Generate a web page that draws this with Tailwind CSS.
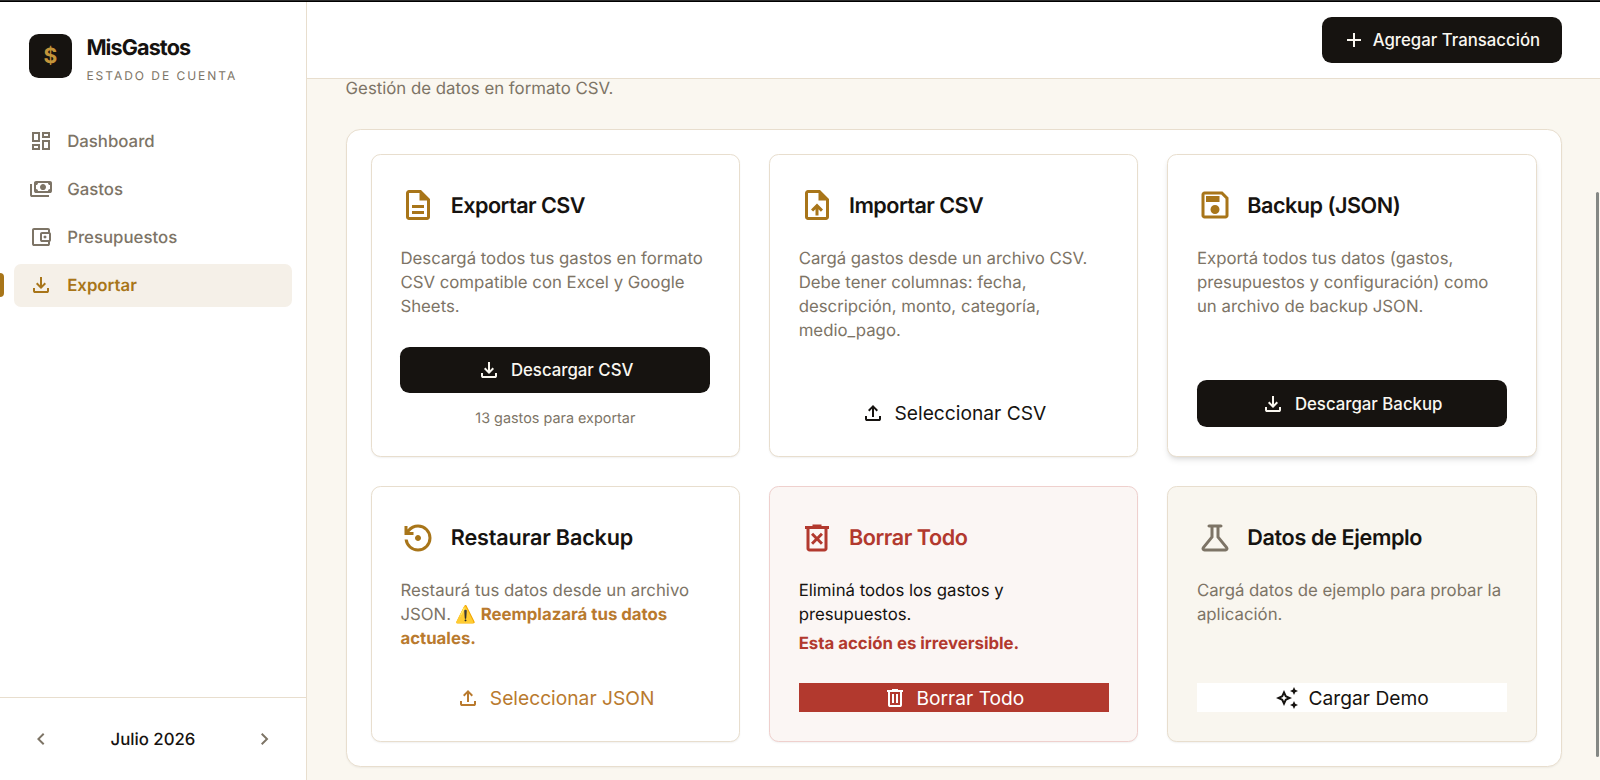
<!DOCTYPE html>
<html lang="es">
<head>
  <meta charset="UTF-8">
  <title>MisGastos</title>
  <script src="https://cdn.jsdelivr.net/npm/@tailwindcss/browser@4"></script>
</head>
<body class="h-[780px] overflow-hidden bg-[#faf7f0] text-[#161310] font-['Inter',sans-serif] text-[19.2px] leading-[28.8px] [text-rendering:geometricPrecision]">

  <!-- Icons -->
  <svg class="hidden">
    <symbol id="i-dashboard" viewBox="0 0 24 24"><path d="M19 5v2h-4V5h4M9 5v6H5V5h4m10 8v6h-4v-6h4M9 17v2H5v-2h4M21 3h-8v6h8V3zM11 3H3v10h8V3zm10 8h-8v10h8V11zm-10 4H3v6h8v-6z"/></symbol>
    <symbol id="i-payments" viewBox="0 -960 960 960"><path d="M560-440q-50 0-85-35t-35-85q0-50 35-85t85-35q50 0 85 35t35 85q0 50-35 85t-85 35ZM280-320q-33 0-56.5-23.5T200-400v-320q0-33 23.5-56.5T280-800h560q33 0 56.5 23.5T920-720v320q0 33-23.5 56.5T840-320H280Zm80-80h400q0-33 23.5-56.5T840-480v-160q-33 0-56.5-23.5T760-720H360q0 33-23.5 56.5T280-640v160q33 0 56.5 23.5T360-400Zm440 240H120q-33 0-56.5-23.5T40-240v-440h80v440h680v80Z"/></symbol>
    <symbol id="i-wallet" viewBox="0 -960 960 960"><path d="M200-120q-33 0-56.5-23.5T120-200v-560q0-33 23.5-56.5T200-840h560q33 0 56.5 23.5T840-760v100h-80v-100H200v560h560v-100h80v100q0 33-23.5 56.5T760-120H200Zm320-160q-33 0-56.5-23.5T440-360v-240q0-33 23.5-56.5T520-680h280q33 0 56.5 23.5T880-600v240q0 33-23.5 56.5T800-280H520Zm280-80v-240H520v240h280Zm-160-60q25 0 42.5-17.5T700-480q0-25-17.5-42.5T640-540q-25 0-42.5 17.5T580-480q0 25 17.5 42.5T640-420Z"/></symbol>
    <symbol id="i-download" viewBox="0 -960 960 960"><path d="M480-320 280-520l56-58 104 104v-326h80v326l104-104 56 58-200 200ZM240-160q-33 0-56.5-23.5T160-240v-120h80v120h480v-120h80v120q0 33-23.5 56.5T720-160H240Z"/></symbol>
    <symbol id="i-upload" viewBox="0 -960 960 960"><path d="M440-320v-326L336-542l-56-58 200-200 200 200-56 58-104-104v326h-80ZM240-160q-33 0-56.5-23.5T160-240v-120h80v120h480v-120h80v120q0 33-23.5 56.5T720-160H240Z"/></symbol>
    <symbol id="i-description" viewBox="0 -960 960 960"><path d="M320-240h320v-80H320v80Zm0-160h320v-80H320v80ZM240-80q-33 0-56.5-23.5T160-160v-640q0-33 23.5-56.5T240-880h320l240 240v480q0 33-23.5 56.5T720-80H240Zm280-520v-200H240v640h480v-440H520Z"/></symbol>
    <symbol id="i-upload-file" viewBox="0 -960 960 960"><path d="M440-200h80v-167l64 64 56-57-160-160-160 160 57 56 63-63v167ZM240-80q-33 0-56.5-23.5T160-160v-640q0-33 23.5-56.5T240-880h320l240 240v480q0 33-23.5 56.5T720-80H240Zm280-520v-200H240v640h480v-440H520Z"/></symbol>
    <symbol id="i-save" viewBox="0 -960 960 960"><path d="M840-680v480q0 33-23.5 56.5T760-120H200q-33 0-56.5-23.5T120-200v-560q0-33 23.5-56.5T200-840h480l160 160Zm-80 34L646-760H200v560h560v-446ZM480-240q50 0 85-35t35-85q0-50-35-85t-85-35q-50 0-85 35t-35 85q0 50 35 85t85 35ZM240-560h360v-160H240v160Z"/></symbol>
    <symbol id="i-restore" viewBox="0 -960 960 960"><path d="M480-120q-138 0-240.5-91.5T122-440h82q14 104 92.5 172T480-200q117 0 198.5-81.5T760-480q0-117-81.5-198.5T480-760q-69 0-129 32t-101 88h110v80H120v-240h80v94q51-64 124.5-99T480-840q75 0 140.5 28.5t114 77q48.5 48.5 77 114T840-480q0 75-28.5 140.5t-77 114q-48.5 48.5-114 77T480-120Zm0-280q-33 0-56.5-23.5T400-480q0-33 23.5-56.5T480-560q33 0 56.5 23.5T560-480q0 33-23.5 56.5T480-400Z"/></symbol>
    <symbol id="i-delete-forever" viewBox="0 -960 960 960"><path d="m376-300 104-104 104 104 56-56-104-104 104-104-56-56-104 104-104-104-56 56 104 104-104 104 56 56Zm-96 180q-33 0-56.5-23.5T200-200v-520h-40v-80h200v-40h240v40h200v80h-40v520q0 33-23.5 56.5T680-120H280Zm400-600H280v520h400v-520Z"/></symbol>
    <symbol id="i-delete" viewBox="0 -960 960 960"><path d="M280-120q-33 0-56.5-23.5T200-200v-520h-40v-80h200v-40h240v40h200v80h-40v520q0 33-23.5 56.5T680-120H280Zm400-600H280v520h400v-520ZM360-280h80v-360h-80v360Zm160 0h80v-360h-80v360Z"/></symbol>
    <symbol id="i-science" viewBox="0 -960 960 960"><path d="M200-120q-51 0-72.5-45.5T138-250l222-270v-240h-40q-17 0-28.5-11.5T280-800q0-17 11.5-28.5T320-840h320q17 0 28.5 11.5T680-800q0 17-11.5 28.5T640-760h-40v240l222 270q32 39 10.5 84.5T760-120H200Zm0-80h560L520-492v-268h-80v268L200-200Z"/></symbol>
    <symbol id="i-sparkles" viewBox="0 -960 960 960"><path d="m760-600-50-110-110-50 110-50 50-110 50 110 110 50-110 50-50 110Zm0 560-50-110-110-50 110-50 50-110 50 110 110 50-110 50-50 110ZM360-160 260-380 40-480l220-100 100-220 100 220 220 100-220 100-100 220Zm0-194 40-86 86-40-86-40-40-86-40 86-86 40 86 40 40 86Z"/></symbol>
    <symbol id="i-add" viewBox="0 -960 960 960"><path d="M440-440H200v-80h240v-240h80v240h240v80H520v240h-80v-240Z"/></symbol>
    <symbol id="i-left" viewBox="0 -960 960 960"><path d="M560-240 320-480l240-240 56 56-184 184 184 184-56 56Z"/></symbol>
    <symbol id="i-right" viewBox="0 -960 960 960"><path d="M504-480 320-664l56-56 240 240-240 240-56-56 184-184Z"/></symbol>
  </svg>

  <div class="flex h-full flex-col">
    <div class="h-[2px] shrink-0 border-t border-[#2b2b2b] bg-black"></div>

    <div class="flex min-h-0 flex-1">
      <!-- Sidebar -->
      <aside class="flex w-[307px] shrink-0 flex-col border-r border-[#e8dece] bg-white">
        <div class="flex gap-[14.4px] px-[28.8px] pt-[32px]">
          <div class="flex h-[44px] w-[43.2px] items-center justify-center rounded-[9.6px] bg-[#161310] pt-[2px] text-[21px] font-bold text-[#c4953a]">$</div>
          <div>
            <h1 class="mt-px text-[21.6px] leading-[27px] font-bold tracking-[-0.9px]">MisGastos</h1>
            <p class="mt-[5px] text-[12px] leading-[18px] tracking-[1.97px] text-[#7d7466]">ESTADO DE CUENTA</p>
          </div>
        </div>

        <nav class="mt-[35px] flex flex-col gap-[4.8px] px-[14.4px] text-[16.8px] leading-[24px] font-medium text-[#7d7466]">
          <a href="#" class="flex h-[43.2px] items-center gap-[14.4px] rounded-[7px] px-[14.4px]"><svg class="mb-[2px] size-6 fill-current"><use href="#i-dashboard"/></svg>Dashboard</a>
          <a href="#" class="flex h-[43.2px] items-center gap-[14.4px] rounded-[7px] px-[14.4px]"><svg class="mb-[2px] size-6 fill-current"><use href="#i-payments"/></svg>Gastos</a>
          <a href="#" class="flex h-[43.2px] items-center gap-[14.4px] rounded-[7px] px-[14.4px]"><svg class="mb-[2px] size-6 fill-current"><use href="#i-wallet"/></svg>Presupuestos</a>
          <a href="#" class="relative flex h-[43.2px] items-center gap-[14.4px] rounded-[7px] bg-[#f5f0e8] px-[14.4px] font-semibold text-[#a87519]">
            <span class="absolute top-[9px] -left-[14.4px] h-6 w-1 rounded-r bg-[#a87519]"></span>
            <svg class="mb-px size-6 fill-current"><use href="#i-download"/></svg>Exportar
          </a>
        </nav>

        <!-- Month picker -->
        <div class="mt-auto flex h-[83px] items-center justify-between border-t border-[#e8dece] px-[28.8px] text-[16.8px] leading-[24px] font-medium">
          <svg class="size-6 fill-[#7d7466]"><use href="#i-left"/></svg>
          <span class="mt-px">Julio 2026</span>
          <svg class="size-6 fill-[#7d7466]"><use href="#i-right"/></svg>
        </div>
      </aside>

      <div class="flex min-w-0 flex-1 flex-col">
        <header class="flex h-[77px] shrink-0 items-center justify-end border-b border-[#e8dece] bg-white px-[38.4px]">
          <button class="flex h-[46px] w-[240px] items-center justify-center gap-[6.6px] rounded-[9.6px] bg-[#161310] pr-px text-[16.8px] leading-[24px] font-medium text-[#faf7f0]">
            <svg class="size-6 fill-current"><use href="#i-add"/></svg>Agregar Transacción
          </button>
        </header>

        <main class="relative min-h-0 flex-1 overflow-hidden pr-[38.4px] pl-[38.6px]">
          <p class="mt-[-2.4px] text-[16.8px] leading-[24px] text-[#7d7466]">Gestión de datos en formato CSV.</p>

          <section class="mt-[28.8px] grid grid-cols-3 gap-x-[28.8px] gap-y-[29.4px] rounded-[14.4px] border border-[#e8dece] bg-white p-[24px] shadow-[0_1px_2px_rgba(22,19,16,0.05)]">

            <!-- Exportar CSV -->
            <div class="flex flex-col rounded-[9.6px] border border-[#e8dece] bg-white p-[28.8px] pb-[28.2px] shadow-[0_1px_2px_rgba(22,19,16,0.06)]">
              <div class="mb-[19.2px] flex h-[43.2px] items-center gap-[14.4px]">
                <svg class="mb-px size-9 fill-[#a87519]"><use href="#i-description"/></svg>
                <h3 class="mt-[2px] text-[21.6px] font-semibold tracking-[-0.55px]">Exportar CSV</h3>
              </div>
              <p class="mb-[28.8px] text-[16.8px] leading-[24px] text-[#7d7466]">Descargá todos tus gastos en formato CSV compatible con Excel y Google Sheets.</p>
              <button class="mt-auto flex h-[46px] items-center justify-center gap-[9.6px] rounded-[9.6px] bg-[#161310] text-[16.8px] leading-[24px] font-medium text-[#faf7f0]">
                <svg class="size-6 fill-current"><use href="#i-download"/></svg>Descargar CSV
              </button>
              <p class="mt-[15.2px] text-center text-[14.4px] leading-[19.2px] text-[#7d7466]">13 gastos para exportar</p>
            </div>

            <!-- Importar CSV -->
            <div class="flex flex-col rounded-[9.6px] border border-[#e8dece] bg-white p-[28.8px] pb-[28.4px] shadow-[0_1px_2px_rgba(22,19,16,0.06)]">
              <div class="mb-[19.2px] flex h-[43.2px] items-center gap-[14.4px]">
                <svg class="mb-px size-9 fill-[#a87519]"><use href="#i-upload-file"/></svg>
                <h3 class="mt-[2px] text-[21.6px] font-semibold tracking-[-0.55px]">Importar CSV</h3>
              </div>
              <p class="text-[16.8px] leading-[24px] text-[#7d7466]">Cargá gastos desde un archivo CSV. Debe tener columnas: fecha, descripción, monto, categoría, medio_pago.</p>
              <button class="mt-auto flex items-center justify-center gap-[9.6px]">
                <svg class="size-6 fill-current"><use href="#i-upload"/></svg>Seleccionar CSV
              </button>
            </div>

            <!-- Backup -->
            <div class="flex flex-col rounded-[9.6px] border border-[#e8dece] bg-white p-[28.8px] shadow-[0_4px_6px_-1px_rgba(0,0,0,0.1),0_2px_4px_-2px_rgba(0,0,0,0.1)]">
              <div class="mb-[19.2px] flex h-[43.2px] items-center gap-[14.4px]">
                <svg class="mb-px size-9 fill-[#a87519]"><use href="#i-save"/></svg>
                <h3 class="mt-[2px] text-[21.6px] font-semibold tracking-[-0.5px]">Backup (JSON)</h3>
              </div>
              <p class="text-[16.8px] leading-[24px] text-[#7d7466]">Exportá todos tus datos (gastos, presupuestos y configuración) como un archivo de backup JSON.</p>
              <button class="mt-auto flex h-[47px] items-center justify-center gap-[9.6px] rounded-[9.6px] bg-[#161310] pt-px text-[16.8px] leading-[24px] font-medium text-[#faf7f0]">
                <svg class="size-6 fill-current"><use href="#i-download"/></svg>Descargar Backup
              </button>
            </div>

            <!-- Restaurar -->
            <div class="flex flex-col rounded-[9.6px] border border-[#e8dece] bg-white p-[28.8px] pt-[29.1px] shadow-[0_1px_2px_rgba(22,19,16,0.06)]">
              <div class="mb-[19.2px] flex h-[43.2px] items-center gap-[14.4px]">
                <svg class="size-9 fill-[#a87519]"><use href="#i-restore"/></svg>
                <h3 class="text-[21.6px] font-semibold tracking-[-0.15px]">Restaurar Backup</h3>
              </div>
              <p class="text-[16.8px] leading-[24px] text-[#7d7466]">Restaurá tus datos desde un archivo JSON. <strong class="font-bold text-[#b97a2e]">⚠️ Reemplazará tus datos actuales.</strong></p>
              <button class="mt-auto flex items-center justify-center gap-[9.6px] pt-[1.2px] leading-[27.6px] text-[#b97a2e]">
                <svg class="size-6 fill-current"><use href="#i-upload"/></svg>Seleccionar JSON
              </button>
            </div>

            <!-- Borrar todo -->
            <div class="flex flex-col rounded-[9.6px] border border-[#efd0cd] bg-[#fbf6f4] p-[28.8px] pt-[29.1px] shadow-[0_1px_2px_rgba(22,19,16,0.06)]">
              <div class="mb-[19.2px] flex h-[43.2px] items-center gap-[14.4px] text-[#b2392e]">
                <svg class="size-9 fill-current"><use href="#i-delete-forever"/></svg>
                <h3 class="text-[21.6px] font-semibold tracking-[-0.45px]">Borrar Todo</h3>
              </div>
              <p class="text-[16.8px] leading-[24px]">Eliminá todos los gastos y presupuestos.</p>
              <p class="mt-[4.8px] mb-[27.8px] text-[16.8px] leading-[24px] font-bold text-[#b2392e]">Esta acción es irreversible.</p>
              <button class="mt-auto flex items-center justify-center gap-[9.6px] bg-[#b2392e] pt-[1.2px] leading-[27.6px] text-white">
                <svg class="size-6 fill-current"><use href="#i-delete"/></svg>Borrar Todo
              </button>
            </div>

            <!-- Datos de ejemplo -->
            <div class="flex flex-col rounded-[9.6px] border border-[#e8dece] bg-[#f9f6ef] p-[28.8px] pt-[29.1px] shadow-[0_1px_2px_rgba(22,19,16,0.06)]">
              <div class="mb-[19.2px] flex h-[43.2px] items-center gap-[14.4px]">
                <svg class="size-9 fill-[#7d7466]"><use href="#i-science"/></svg>
                <h3 class="text-[21.6px] font-semibold tracking-[-0.37px]">Datos de Ejemplo</h3>
              </div>
              <p class="text-[16.8px] leading-[24px] text-[#7d7466]">Cargá datos de ejemplo para probar la aplicación.</p>
              <button class="mt-auto flex items-center justify-center gap-[9.6px] bg-white pt-[1.2px] leading-[27.6px]">
                <svg class="size-6 fill-current"><use href="#i-sparkles"/></svg>Cargar Demo
              </button>
            </div>
          </section>

          <!-- Scrollbar thumb -->
          <div class="absolute top-[113px] right-[1px] h-[565px] w-[3px] rounded-full bg-[#848885]"></div>
        </main>
      </div>
    </div>
  </div>
</body>
</html>
